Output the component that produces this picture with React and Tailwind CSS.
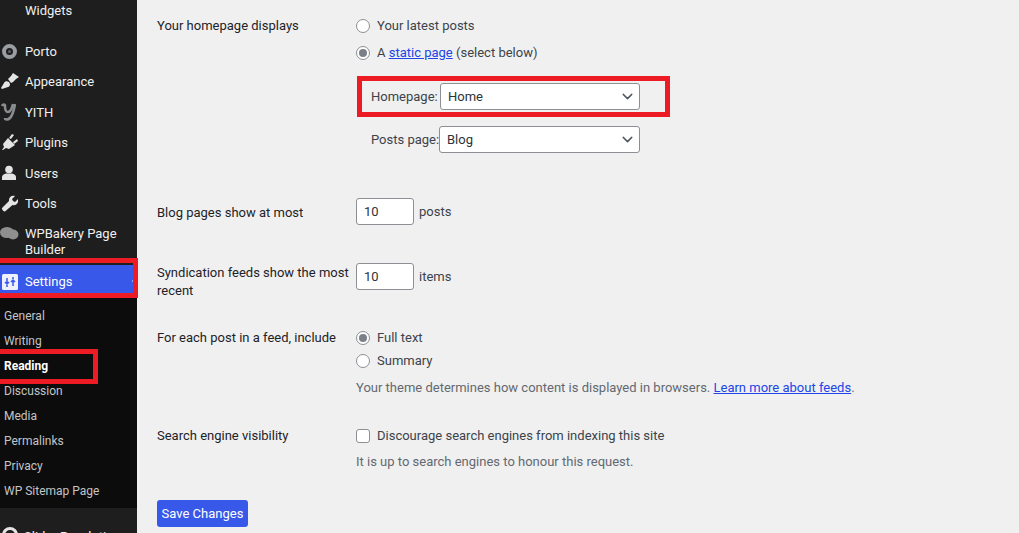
import { ChevronDown } from 'lucide-react';

const FONT = "font-['Roboto','Noto_Sans',sans-serif]";

const PortoIcon = () => (
  <svg width="17" height="17" viewBox="0 0 17 17">
    <circle cx="8.5" cy="8.5" r="5.5" fill="none" stroke="#9a9ea1" strokeWidth="4" />
    <circle cx="8.5" cy="8.5" r="1.5" fill="#5d6063" />
  </svg>
);

const BrushIcon = () => (
  <svg width="18" height="17" viewBox="0 0 18 17" fill="#e4e4e4">
    <path d="M0 15l3-5c1-2 3-2 5-1l1 2c0 2-1 3-2 3l-6 2z" />
    <path d="M7 6l3-3 2-3 6 4-3 2-3 3-2 1z" />
  </svg>
);

const YithIcon = () => (
  <svg width="15" height="20" viewBox="0 0 15 20" fill="none" stroke="#8a8d90" strokeWidth="2.6">
    <path d="M1 4c1-2 3-2 3 0 0 3 0 6 3 6 2 0 4-4 5-8" />
    <path d="M14 2c-1 6-2 11-5 14-2 2-5 2-5 0" />
  </svg>
);

const PluginIcon = () => (
  <svg width="17" height="17" viewBox="0 0 17 17" fill="#e4e4e4">
    <path d="M1 16l2-3-1-3 5-6 7 7-6 4-3-1-3 2z" />
    <path d="M8 4l3-4 2 1-3 4zM12 8l4-3 1 2-4 3z" />
  </svg>
);

const UserIcon = () => (
  <svg width="16" height="16" viewBox="0 0 16 16" fill="#e4e4e4">
    <circle cx="8" cy="4.5" r="3.8" />
    <path d="M1 15v-3c0-2 2-3 4-3.500h6c2 .5 4 1.500 4 3.500v3z" />
  </svg>
);

const WrenchIcon = () => (
  <svg width="17" height="17" viewBox="0 0 17 17" fill="#e4e4e4">
    <path d="M1 13l7-7c-.5-3 2-6 6-5l-3 3 1 2 2 1 3-3c1 4-2 7-5.500 6L4 16.500c-1 .5-3.500-2-3-3.500z" />
  </svg>
);

const BakeryIcon = () => (
  <svg width="19" height="14" viewBox="0 0 19 14" fill="#8f8f8f">
    <ellipse cx="7" cy="5.500" rx="7" ry="5.500" />
    <ellipse cx="13" cy="7.500" rx="5.500" ry="5" />
  </svg>
);

const SettingsIcon = () => (
  <svg width="16" height="16" viewBox="0 0 16 16">
    <rect width="16" height="16" rx="1.500" fill="#eef1fd" />
    <path d="M5 4v6M3 8l2 2 2-2M4 12h2M11 12V6M9 8l2-2 2 2M10 4h2" stroke="#3858e9" strokeWidth="1.500" fill="none" />
  </svg>
);

const MENU_TOP = [
  ['Porto', <PortoIcon />],
  ['Appearance', <BrushIcon />],
  ['YITH', <YithIcon />],
  ['Plugins', <PluginIcon />],
  ['Users', <UserIcon />],
  ['Tools', <WrenchIcon />],
];

const SUBMENU = ['General', 'Writing', 'Reading', 'Discussion', 'Media', 'Permalinks', 'Privacy', 'WP Sitemap Page'];

function Sidebar() {
  return (
    <aside className="w-[137px] shrink-0 bg-[#1e1e1e] text-[13px] text-[#f0f0f0]">
      <div className="h-[36px] pl-[25px] pt-[1px] leading-[20px]">Widgets</div>
      {MENU_TOP.map(([label, icon]) => (
        <div key={label} className="flex h-[30.5px] items-center">
          <span className="flex w-[25px] justify-start pl-[1px]">{icon}</span>
          <span>{label}</span>
        </div>
      ))}
      <div className="flex h-[46px] items-start pt-[7px]">
        <span className="flex w-[25px] pt-[1px]"><BakeryIcon /></span>
        <span className="w-[100px] leading-[16px]">WPBakery Page Builder</span>
      </div>
      <div className="relative flex h-[33px] items-center bg-[#3858e9] text-white">
        <span className="flex w-[25px] pl-[2px]"><SettingsIcon /></span>
        <span>Settings</span>
        <span className="absolute right-0 top-[11px] h-0 w-0 border-y-[5px] border-r-[5px] border-y-transparent border-r-[#f1f1f1]" />
      </div>
      <div className="h-[210px] bg-[#0c0c0c] pt-[5px] text-[12px] text-[#c3c4c7]">
        {SUBMENU.map((item) => (
          <div key={item} className={`flex h-[25px] items-center pl-[4px] ${item === 'Reading' ? 'font-bold text-white' : ''}`}>
            {item}
          </div>
        ))}
      </div>
      <div className="flex h-[30px] items-start pt-[19px]">
        <span className="ml-[2px] mr-[6px] h-[16px] w-[16px] rounded-full border-[3px] border-[#e4e4e4]" />
        <span className="leading-[20px]">Slider Revolution</span>
      </div>
    </aside>
  );
}

function Radio({ checked }) {
  return (
    <span className="flex h-[14px] w-[14px] shrink-0 items-center justify-center rounded-full border border-[#8c8f94] bg-white">
      {checked && <span className="h-[8px] w-[8px] rounded-full bg-[#7b8088]" />}
    </span>
  );
}

function SelectBox({ value, width }) {
  return (
    <div className={`flex h-[27px] ${width} items-center justify-between rounded-[3px] border border-[#8c8f94] bg-white pl-[7px] pr-[2px] text-[#2c3338]`}>
      <span>{value}</span>
      <ChevronDown size={17} strokeWidth={2} className="mr-[1px] text-[#50575e]" />
    </div>
  );
}

function NumberBox({ value }) {
  return (
    <div className="flex h-[27px] w-[58px] items-center rounded-[3px] border border-[#8c8f94] bg-white pl-[7px] text-[#2c3338]">
      {value}
    </div>
  );
}

function Content() {
  return (
    <main className="relative flex-1 pl-[20px] text-[13px] text-[#3c434a]">
      <div className="flex h-[189px] pt-[16px]">
        <div className="w-[199px] leading-[20px] text-[#1d2327]">Your homepage displays</div>
        <div>
          <div className="flex h-[20px] items-center gap-[7px]"><Radio /><span>Your latest posts</span></div>
          <div className="mt-[7px] flex h-[20px] items-center gap-[7px]"><Radio checked /><span>A <span className="text-[#2145e6] underline">static page</span> (select below)</span></div>
          <div className="ml-[15px] mt-[20px] flex items-center"><span className="w-[69px] whitespace-nowrap">Homepage:</span><SelectBox value="Home" width="w-[200px]" /></div>
          <div className="ml-[15px] mt-[16px] flex items-center"><span className="w-[68px] whitespace-nowrap">Posts page:</span><SelectBox value="Blog" width="w-[201px]" /></div>
        </div>
      </div>

      <div className="flex h-[64px] items-start pt-[9px]">
        <div className="w-[199px] pt-[5px] leading-[20px] text-[#1d2327]">Blog pages show at most</div>
        <div className="flex items-center gap-[5px]"><NumberBox value="10" /><span>posts</span></div>
      </div>

      <div className="flex h-[72px] items-start pt-[10px]">
        <div className="w-[199px] pt-[1px] leading-[18px] text-[#1d2327]">Syndication feeds show the most recent</div>
        <div className="flex items-center gap-[5px]"><NumberBox value="10" /><span>items</span></div>
      </div>

      <div className="flex h-[100px] items-start pt-[3px]">
        <div className="w-[199px] leading-[20px] text-[#1d2327]">For each post in a feed, include</div>
        <div>
          <div className="flex h-[20px] items-center gap-[7px]"><Radio checked /><span>Full text</span></div>
          <div className="mt-[3px] flex h-[20px] items-center gap-[7px]"><Radio /><span>Summary</span></div>
          <p className="mt-[7px] whitespace-nowrap leading-[20px] text-[#646970]">
            Your theme determines how content is displayed in browsers. <span className="text-[#2145e6] underline">Learn more about feeds</span>.
          </p>
        </div>
      </div>

      <div className="flex h-[75px] items-start">
        <div className="w-[199px] pt-[1px] leading-[20px] text-[#1d2327]">Search engine visibility</div>
        <div>
          <div className="flex h-[22px] items-center gap-[7px]">
            <span className="h-[14px] w-[14px] rounded-[3px] border border-[#8c8f94] bg-white" />
            <span>Discourage search engines from indexing this site</span>
          </div>
          <p className="mt-[5px] leading-[20px] text-[#646970]">It is up to search engines to honour this request.</p>
        </div>
      </div>

      <button className="h-[27px] w-[91px] rounded-[3px] bg-[#3858e9] text-[13px] text-white">Save Changes</button>
    </main>
  );
}

export default function App() {
  return (
    <div className={`relative flex h-[533px] w-[1019px] overflow-hidden bg-[#f0f0f1] ${FONT}`}>
      <Sidebar />
      <Content />
      {/* red annotation boxes drawn over the screenshot */}
      <div className="absolute left-[-6px] top-[258px] h-[40px] w-[144px] border-[5px] border-[#ed1c24]" />
      <div className="absolute left-[-6px] top-[349px] h-[35px] w-[104px] border-[5px] border-[#ed1c24]" />
      <div className="absolute left-[357px] top-[76px] h-[41px] w-[313px] border-[5px] border-[#ed1c24]" />
    </div>
  );
}
